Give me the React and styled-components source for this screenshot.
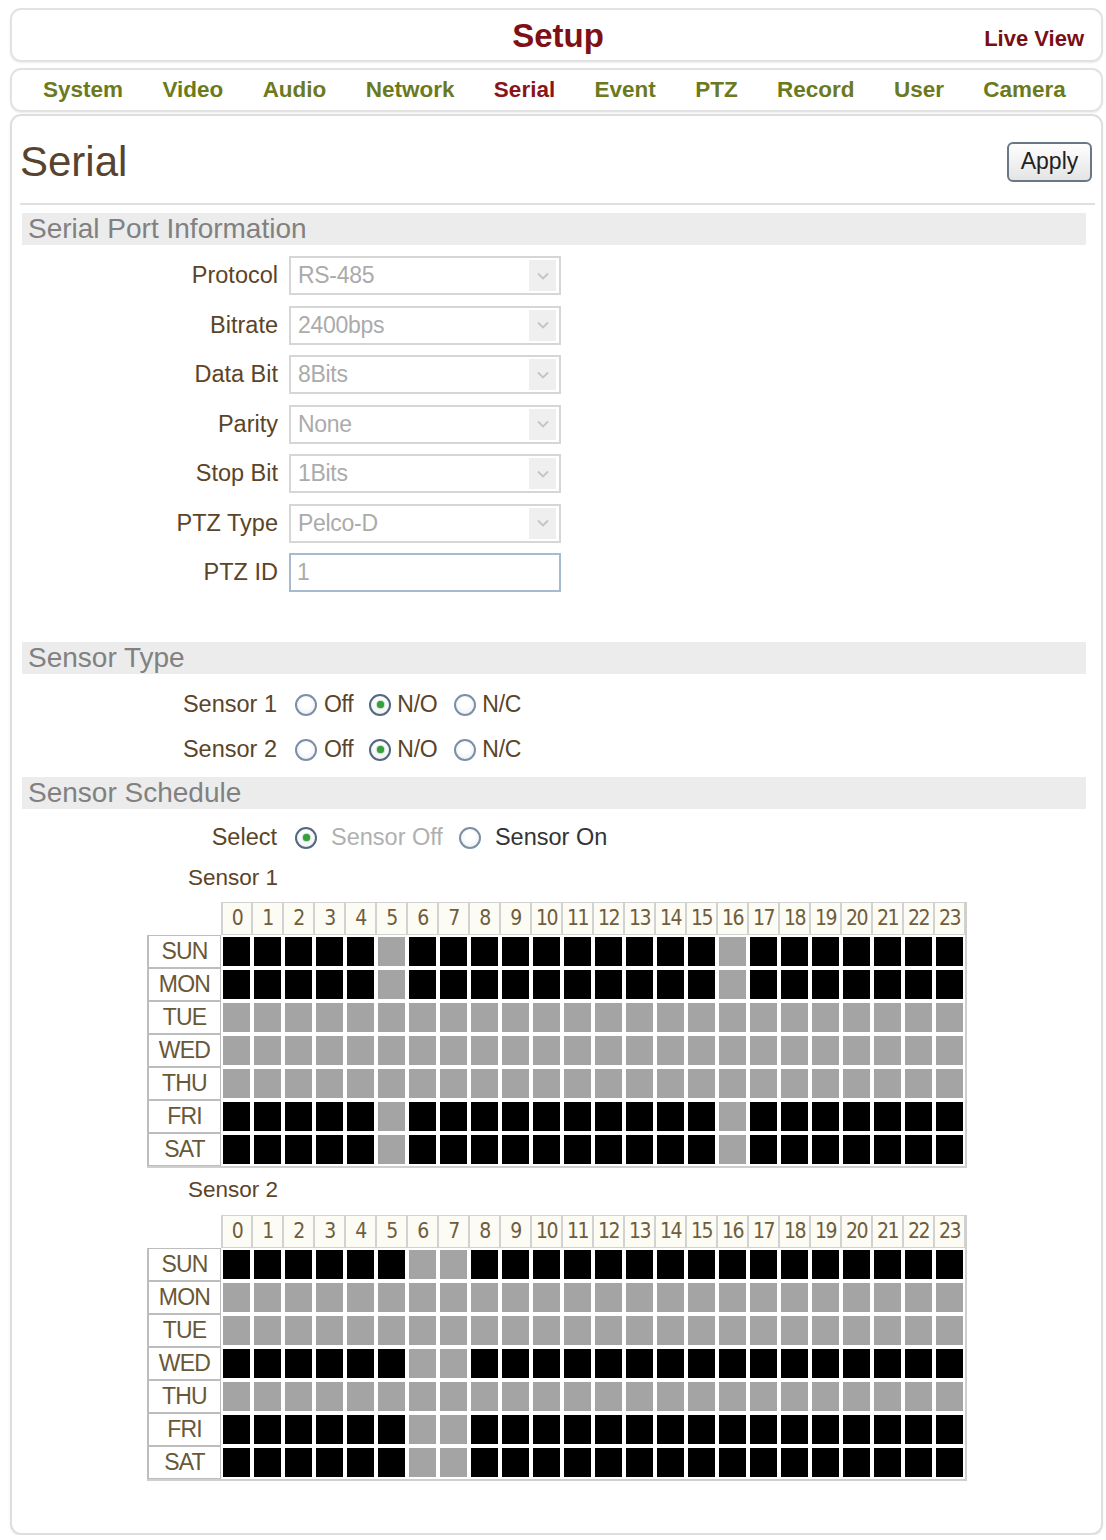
import React from 'react';
import styled, { createGlobalStyle, css } from 'styled-components';

const GlobalStyle = createGlobalStyle`
  body {
    margin: 0;
    background: #fff;
    font-family: "Liberation Sans", Arial, sans-serif;
  }
`;

const Page = styled.div`
  padding: 8px 0 0 10px;
  width: 1093px;
`;

const HeaderBox = styled.div`
  height: 54px;
  box-sizing: border-box;
  border: 2px solid #e2e2e2;
  border-radius: 11px;
  box-shadow: 0 1px 2px rgba(0, 0, 0, 0.08);
  display: grid;
  grid-template-columns: 1fr auto 1fr;
  align-items: center;
  padding: 0 17px 0 20px;
`;

const PageTitle = styled.div`
  grid-column: 2;
  font-size: 33px;
  font-weight: bold;
  color: #7f1016;
  padding-top: 1px;
`;

const LiveLink = styled.a`
  grid-column: 3;
  justify-self: end;
  font-size: 22px;
  font-weight: bold;
  color: #780f16;
  padding-top: 8px;
  text-decoration: none;
`;

const NavBar = styled.nav`
  margin-top: 6px;
  height: 44px;
  box-sizing: border-box;
  border: 2px solid #e2e2e2;
  border-radius: 11px;
  box-shadow: 0 1px 2px rgba(0, 0, 0, 0.08);
  display: flex;
  align-items: center;
  justify-content: space-between;
  padding: 0 35px 0 31px;
`;

const NavItem = styled.a`
  font-size: 22.5px;
  font-weight: bold;
  color: ${p => (p.$active ? '#8a1418' : '#6b7a20')};
  text-decoration: none;
`;

const Panel = styled.main`
  margin-top: 2px;
  height: 1421px;
  box-sizing: border-box;
  border: 2px solid #dedede;
  border-radius: 11px;
  box-shadow: 0 1px 2px rgba(0, 0, 0, 0.08);
  padding: 26px 15px 0 10px;
  display: flex;
  flex-direction: column;
`;

const TitleRow = styled.div`
  display: flex;
  align-items: center;
  justify-content: space-between;
  height: 40px;
`;

const Title = styled.h1`
  margin: 0 0 0 -2px;
  font-size: 42px;
  font-weight: normal;
  line-height: 1;
  color: #574330;
`;

const ApplyButton = styled.button`
  margin-right: -6px;
  width: 85px;
  height: 40px;
  border: 2px solid #6a7886;
  border-radius: 6px;
  background: linear-gradient(#ffffff, #e4e4e4);
  font-family: inherit;
  font-size: 23px;
  color: #222;
  padding: 0 0 2px;
`;

const Rule = styled.hr`
  margin: 21px -9px 0 -2px;
  border: 0;
  height: 2px;
  background: #e0e0e0;
`;

const SectionBar = styled.div`
  margin-top: ${p => p.$top}px;
  height: 32px;
  background: #ececec;
  display: flex;
  align-items: center;
  padding-left: 6px;
  font-size: 28px;
  color: #818181;
`;

const FormGrid = styled.div`
  margin-top: 11px;
  display: grid;
  grid-template-columns: 256px 272px;
  grid-auto-rows: 39.5px;
  row-gap: 10px;
  column-gap: 11px;
  align-items: stretch;
`;

const Label = styled.span`
  justify-self: end;
  align-self: center;
  font-size: 23.5px;
  color: #5b4428;
`;

const fieldBase = css`
  box-sizing: border-box;
  height: 39px;
  display: flex;
  align-items: center;
  font-size: 23px;
  color: #ababab;
  letter-spacing: -0.3px;
`;

const SelectBox = styled.div`
  ${fieldBase};
  border: 2px solid #d6d6d6;
  background: #fff;
  padding: 0 3px 0 7px;
  justify-content: space-between;
`;

const ArrowBox = styled.span`
  width: 27px;
  height: 31px;
  background: #efefef;
  display: flex;
  align-items: center;
  justify-content: center;
`;

const TextInput = styled.div`
  ${fieldBase};
  border: 2px solid #a6bad0;
  padding-left: 6px;
`;

const OptionGrid = styled.div`
  margin-top: ${p => p.$top}px;
  display: grid;
  grid-template-columns: 255px auto;
  grid-auto-rows: 32px;
  row-gap: ${p => p.$gap || 0}px;
  column-gap: 18px;
  align-items: center;
`;

const RadioGroup = styled.div`
  display: flex;
  align-items: center;
`;

const RadioOption = styled.label`
  display: flex;
  align-items: center;
  gap: ${p => p.$spread}px;
  margin-right: ${p => p.$after}px;
  font-size: ${p => p.$size || 23}px;
  letter-spacing: ${p => p.$tracking ?? -0.3}px;
  color: ${p => p.$tone || '#5b4428'};
`;

const RadioDot = styled.span`
  position: relative;
  width: 22px;
  height: 22px;
  box-sizing: border-box;
  border-radius: 50%;
  border: 2px solid ${p => (p.$on ? '#55687e' : '#7c8fa8')};
  background: radial-gradient(circle at 50% 40%, #ffffff 30%, #e6eaef 100%);

  ${p =>
    p.$on &&
    css`
      &::after {
        content: '';
        position: absolute;
        left: 50%;
        top: 50%;
        width: 7px;
        height: 7px;
        margin: -3.5px 0 0 -3.5px;
        border-radius: 50%;
        background: #36a03c;
        box-shadow: 0 0 2px #2c7a30;
      }
    `}
`;

const ScheduleLabel = styled.div`
  margin: ${p => p.$top}px 0 0 166px;
  height: 22px;
  line-height: 22px;
  font-size: 22.5px;
  color: #5b4428;
`;

const ScheduleGrid = styled.div`
  margin: ${p => p.$top}px 0 0 125px;
  display: grid;
  grid-template-columns: 74px repeat(24, 31px);
  grid-template-rows: repeat(8, 33px);
  width: max-content;
  border-right: 2px solid #cfcfcf;
  border-bottom: 2px solid #cfcfcf;
`;

const Corner = styled.div`
  background: #fff;
`;

const HourHead = styled.div`
  box-sizing: border-box;
  border: 1px solid #d2d2d2;
  border-left-width: ${p => (p.$first ? 2 : 1)}px;
  background: #fcfbf4;
  display: flex;
  align-items: center;
  justify-content: center;
  font-family: "DejaVu Sans Condensed", "DejaVu Sans", sans-serif;
  font-size: 21px;
  letter-spacing: -1.5px;
  color: #6f5d3d;
`;

const DayHead = styled.div`
  box-sizing: border-box;
  border: 1px solid #bdbdbd;
  border-left-width: 2px;
  background: #fff;
  display: flex;
  align-items: center;
  justify-content: center;
  font-size: 23px;
  letter-spacing: -0.8px;
  color: #685838;
`;

const Slot = styled.div`
  box-sizing: border-box;
  border: 2px solid #fff;
  background: ${p => (p.$active ? '#000' : '#a4a4a4')};
`;

const Chevron = () => (
  <svg width="14" height="10" viewBox="0 0 14 10">
    <path d="M2 2.5 L7 7.5 L12 2.5" fill="none" stroke="#c4c4c4" strokeWidth="1.8" />
  </svg>
);

const NAV = ['System', 'Video', 'Audio', 'Network', 'Serial', 'Event', 'PTZ', 'Record', 'User', 'Camera'];

const PORT_FIELDS = [
  { label: 'Protocol', value: 'RS-485' },
  { label: 'Bitrate', value: '2400bps' },
  { label: 'Data Bit', value: '8Bits' },
  { label: 'Parity', value: 'None' },
  { label: 'Stop Bit', value: '1Bits' },
  { label: 'PTZ Type', value: 'Pelco-D' },
];

const DAYS = ['SUN', 'MON', 'TUE', 'WED', 'THU', 'FRI', 'SAT'];
const HOURS = Array.from({ length: 24 }, (_, h) => h);

// per day: null = whole day off, otherwise the hours that are off
const SCHEDULE_1 = { SUN: [5, 16], MON: [5, 16], TUE: null, WED: null, THU: null, FRI: [5, 16], SAT: [5, 16] };
const SCHEDULE_2 = { SUN: [6, 7], MON: null, TUE: null, WED: [6, 7], THU: null, FRI: [6, 7], SAT: [6, 7] };

const Schedule = ({ plan, top }) => (
  <ScheduleGrid $top={top}>
    <Corner />
    {HOURS.map(h => (
      <HourHead key={h} $first={h === 0}>{h}</HourHead>
    ))}
    {DAYS.map(day => (
      <React.Fragment key={day}>
        <DayHead>{day}</DayHead>
        {HOURS.map(h => (
          <Slot key={h} $active={plan[day] !== null && !plan[day].includes(h)} />
        ))}
      </React.Fragment>
    ))}
  </ScheduleGrid>
);

const SensorRadios = ({ name }) => (
  <>
    <Label>{name}</Label>
    <RadioGroup>
      <RadioOption $spread={7} $after={16}><RadioDot />Off</RadioOption>
      <RadioOption $spread={6} $after={17}><RadioDot $on />N/O</RadioOption>
      <RadioOption $spread={6} $after={0}><RadioDot />N/C</RadioOption>
    </RadioGroup>
  </>
);

export default function App() {
  return (
    <Page>
      <GlobalStyle />
      <HeaderBox>
        <PageTitle>Setup</PageTitle>
        <LiveLink>Live View</LiveLink>
      </HeaderBox>

      <NavBar>
        {NAV.map(item => (
          <NavItem key={item} $active={item === 'Serial'}>{item}</NavItem>
        ))}
      </NavBar>

      <Panel>
        <TitleRow>
          <Title>Serial</Title>
          <ApplyButton>Apply</ApplyButton>
        </TitleRow>
        <Rule />

        <SectionBar $top={8}>Serial Port Information</SectionBar>
        <FormGrid>
          {PORT_FIELDS.map(f => (
            <React.Fragment key={f.label}>
              <Label>{f.label}</Label>
              <SelectBox>
                {f.value}
                <ArrowBox><Chevron /></ArrowBox>
              </SelectBox>
            </React.Fragment>
          ))}
          <Label>PTZ ID</Label>
          <TextInput>1</TextInput>
        </FormGrid>

        <SectionBar $top={49}>Sensor Type</SectionBar>
        <OptionGrid $top={15} $gap={13}>
          <SensorRadios name="Sensor 1" />
          <SensorRadios name="Sensor 2" />
        </OptionGrid>

        <SectionBar $top={11}>Sensor Schedule</SectionBar>
        <OptionGrid $top={13}>
          <Label>Select</Label>
          <RadioGroup>
            <RadioOption $spread={14} $after={16} $size={23.5} $tracking={0} $tone="#b0b0b0"><RadioDot $on />Sensor Off</RadioOption>
            <RadioOption $spread={14} $after={0} $size={23.5} $tracking={0} $tone="#333"><RadioDot />Sensor On</RadioOption>
          </RadioGroup>
        </OptionGrid>

        <ScheduleLabel $top={13}>Sensor 1</ScheduleLabel>
        <Schedule plan={SCHEDULE_1} top={13} />

        <ScheduleLabel $top={11}>Sensor 2</ScheduleLabel>
        <Schedule plan={SCHEDULE_2} top={14} />
      </Panel>
    </Page>
  );
}
